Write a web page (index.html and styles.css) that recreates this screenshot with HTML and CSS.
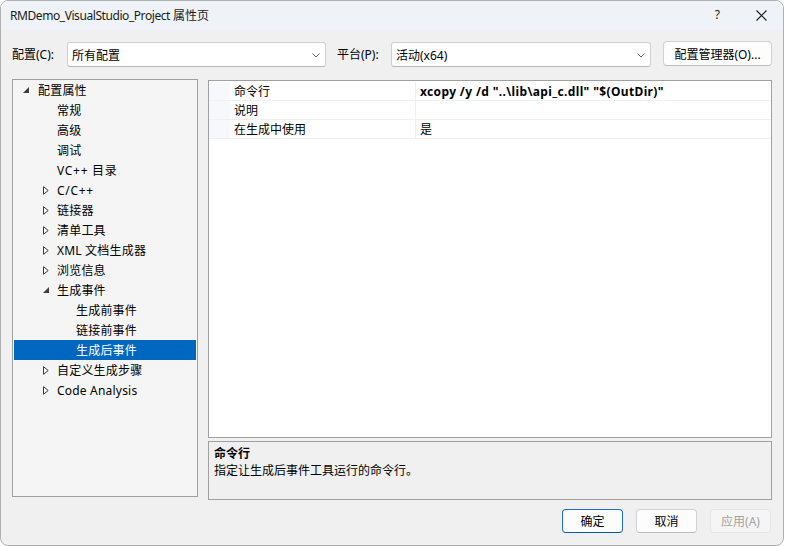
FILE: index.html
```html
<!DOCTYPE html>
<html>
<head>
<meta charset="utf-8">
<title>属性页</title>
<link rel="stylesheet" href="styles.css">
</head>
<body>
<div class="window">
  <div class="titlebar">
    <span class="title"><span class="title-latin">RMDemo_VisualStudio_Project</span> 属性页</span>
    <span class="help">?</span>
    <span class="close"><svg width="11" height="11" viewBox="0 0 11 11"><path d="M0.5 0.5L10.5 10.5M10.5 0.5L0.5 10.5" stroke="#1b1b1b" stroke-width="1.1" fill="none"/></svg></span>
  </div>
  <div class="content">
    <div class="config-row">
      <span class="lbl lbl-config">配置(C):</span>
      <div class="combo combo-config"><span>所有配置</span><svg class="chev" width="8" height="5" viewBox="0 0 8 5"><path d="M0.5 0.5L4 4L7.5 0.5" stroke="#606060" fill="none" stroke-width="1"/></svg></div>
      <span class="lbl lbl-platform">平台(P):</span>
      <div class="combo combo-platform"><span>活动(x64)</span><svg class="chev" width="8" height="5" viewBox="0 0 8 5"><path d="M0.5 0.5L4 4L7.5 0.5" stroke="#606060" fill="none" stroke-width="1"/></svg></div>
      <button class="btn btn-manager">配置管理器(O)...</button>
    </div>
    <div class="main">
      <div class="tree">
        <div class="row l0"><span class="exp"><svg width="6" height="6" viewBox="0 0 6 6"><path d="M6 0L6 6L0 6Z" fill="#3c3c3c"/></svg></span><span>配置属性</span></div>
        <div class="row l1"><span class="exp"></span><span>常规</span></div>
        <div class="row l1"><span class="exp"></span><span>高级</span></div>
        <div class="row l1"><span class="exp"></span><span>调试</span></div>
        <div class="row l1"><span class="exp"></span><span class="wide">VC++ 目录</span></div>
        <div class="row l1"><span class="exp"><svg width="6" height="9" viewBox="0 0 6 9"><path d="M0.5 0.7L5.2 4.5L0.5 8.3Z" fill="none" stroke="#3c3c3c" stroke-width="1"/></svg></span><span class="wide">C/C++</span></div>
        <div class="row l1"><span class="exp"><svg width="6" height="9" viewBox="0 0 6 9"><path d="M0.5 0.7L5.2 4.5L0.5 8.3Z" fill="none" stroke="#3c3c3c" stroke-width="1"/></svg></span><span>链接器</span></div>
        <div class="row l1"><span class="exp"><svg width="6" height="9" viewBox="0 0 6 9"><path d="M0.5 0.7L5.2 4.5L0.5 8.3Z" fill="none" stroke="#3c3c3c" stroke-width="1"/></svg></span><span>清单工具</span></div>
        <div class="row l1"><span class="exp"><svg width="6" height="9" viewBox="0 0 6 9"><path d="M0.5 0.7L5.2 4.5L0.5 8.3Z" fill="none" stroke="#3c3c3c" stroke-width="1"/></svg></span><span>XML 文档生成器</span></div>
        <div class="row l1"><span class="exp"><svg width="6" height="9" viewBox="0 0 6 9"><path d="M0.5 0.7L5.2 4.5L0.5 8.3Z" fill="none" stroke="#3c3c3c" stroke-width="1"/></svg></span><span>浏览信息</span></div>
        <div class="row l1"><span class="exp"><svg width="6" height="6" viewBox="0 0 6 6"><path d="M6 0L6 6L0 6Z" fill="#3c3c3c"/></svg></span><span>生成事件</span></div>
        <div class="row l2"><span class="exp"></span><span>生成前事件</span></div>
        <div class="row l2"><span class="exp"></span><span>链接前事件</span></div>
        <div class="row l2 selected"><span class="exp"></span><span>生成后事件</span></div>
        <div class="row l1"><span class="exp"><svg width="6" height="9" viewBox="0 0 6 9"><path d="M0.5 0.7L5.2 4.5L0.5 8.3Z" fill="none" stroke="#3c3c3c" stroke-width="1"/></svg></span><span>自定义生成步骤</span></div>
        <div class="row l1"><span class="exp"><svg width="6" height="9" viewBox="0 0 6 9"><path d="M0.5 0.7L5.2 4.5L0.5 8.3Z" fill="none" stroke="#3c3c3c" stroke-width="1"/></svg></span><span>Code Analysis</span></div>
      </div>
      <div class="right">
        <div class="grid">
          <div class="prow"><span class="gutter"></span><span class="pname">命令行</span><span class="pval bold">xcopy /y /d "..\lib\api_c.dll" "$(OutDir)"</span></div>
          <div class="prow"><span class="gutter"></span><span class="pname">说明</span><span class="pval"></span></div>
          <div class="prow"><span class="gutter"></span><span class="pname">在生成中使用</span><span class="pval">是</span></div>
        </div>
        <div class="desc">
          <div class="desc-title">命令行</div>
          <div class="desc-text">指定让生成后事件工具运行的命令行。</div>
        </div>
      </div>
    </div>
    <div class="buttons">
      <button class="btn btn-dlg btn-default">确定</button>
      <button class="btn btn-dlg">取消</button>
      <button class="btn btn-dlg btn-disabled">应用(A)</button>
    </div>
  </div>
</div>
</body>
</html>
```

FILE: styles.css
```css
html, body {
  margin: 0;
  padding: 0;
  background: #ffffff;
}
body {
  font-family: "Noto Sans", "Noto Sans CJK SC", sans-serif;
  font-size: 12px;
  color: #000;
}
.window {
  width: 784px;
  height: 546px;
  box-sizing: border-box;
  border: 1px solid #b0b0b0;
  border-radius: 8px;
  background: #f0f0f0;
  overflow: hidden;
  display: flex;
  flex-direction: column;
}
.titlebar {
  height: 29px;
  flex: none;
  background: #eff3f8;
  display: flex;
  align-items: center;
  padding-left: 9px;
  padding-right: 16px;
}
.title {
  flex: 1;
  font-size: 12px;
  color: #1a1a1a;
  margin-top: -2px;
  white-space: nowrap;
}
.title-latin {
  letter-spacing: -0.43px;
}
.help {
  font-size: 12px;
  color: #1a1a1a;
  margin-right: 36px;
  margin-top: -2px;
}
.close {
  display: flex;
  margin-top: -1px;
}
.content {
  flex: 1;
  padding: 11px 11px 0 11px;
  display: flex;
  flex-direction: column;
}
.config-row {
  display: flex;
  align-items: flex-start;
  height: 25px;
}
.lbl {
  height: 25px;
  line-height: 25px;
  margin-top: 1px;
  color: #000;
  white-space: nowrap;
}
.lbl-config {
  width: 55px;
}
.lbl-platform {
  width: 54px;
  margin-left: 11px;
}
.combo {
  height: 25px;
  margin-top: 1px;
  box-sizing: border-box;
  background: #fff;
  border: 1px solid #d0d0d0;
  border-bottom-color: #b8b8b8;
  border-radius: 3px;
  display: flex;
  align-items: center;
  padding-left: 4px;
  padding-right: 5px;
}
.combo span {
  flex: 1;
}
.combo-config {
  width: 259px;
}
.combo-platform {
  width: 260px;
}
.chev {
  display: block;
  margin-top: 1px;
}
.btn {
  font-family: "Noto Sans", "Noto Sans CJK SC", sans-serif;
  font-size: 12px;
  color: #000;
  background: #fdfdfd;
  border: 1px solid #d2d2d2;
  border-bottom-color: #bcbcbc;
  border-radius: 4px;
  box-sizing: border-box;
  padding: 0;
  margin: 0;
}
.btn-manager {
  width: 109px;
  height: 25px;
  margin-left: 12px;
}
.main {
  display: flex;
  margin-top: 13px;
  height: 421px;
}
.tree {
  width: 186px;
  height: 418px;
  box-sizing: border-box;
  border: 1px solid #a0a0a0;
  background: #f5f5f5;
  padding: 0 1px;
  flex: none;
}
.row {
  height: 20px;
  display: flex;
  align-items: center;
  white-space: nowrap;
  color: #000;
  letter-spacing: 0.2px;
}
.row .wide {
  letter-spacing: 0.7px;
}
.row.l0 { padding-left: 5px; }
.row.l1 { padding-left: 24px; }
.row.l2 { padding-left: 43px; }
.exp {
  width: 19px;
  display: flex;
  align-items: center;
  padding-left: 4px;
  box-sizing: border-box;
}
.row.l1 .exp { padding-left: 5px; }
.exp svg { display: block; }
.row.selected {
  background: #0067c0;
  color: #fff;
}
.right {
  margin-left: 10px;
  width: 566px;
  margin-top: 1px;
  display: flex;
  flex-direction: column;
}
.grid {
  height: 358px;
  box-sizing: border-box;
  border: 1px solid #a0a0a0;
  background: #fff;
  padding-top: 1px;
}
.prow {
  height: 19px;
  box-sizing: border-box;
  border-bottom: 1px solid #eef0f4;
  display: flex;
  align-items: stretch;
}
.gutter {
  width: 21px;
  flex: none;
  background: #f6f8fc;
}
.pname {
  width: 186px;
  flex: none;
  padding-left: 4px;
  box-sizing: border-box;
  border-right: 1px solid #eef0f4;
  display: flex;
  align-items: center;
  white-space: nowrap;
}
.pval {
  flex: 1;
  padding-left: 4px;
  display: flex;
  align-items: center;
  white-space: nowrap;
}
.bold {
  font-weight: bold;
  letter-spacing: 0.36px;
}
.desc {
  margin-top: 3px;
  height: 59px;
  box-sizing: border-box;
  border: 1px solid #a0a0a0;
  background: #f0f0f0;
  padding: 3px 5px;
}
.desc-title {
  font-weight: bold;
  line-height: 17px;
}
.desc-text {
  line-height: 18px;
}
.buttons {
  display: flex;
  justify-content: flex-end;
  margin-top: 9px;
  padding-right: 1px;
  gap: 13px;
}
.btn-dlg {
  width: 61px;
  height: 24px;
}
.btn-default {
  border: 1px solid #1e6fc4;
  border-bottom-color: #0a58aa;
}
.btn-disabled {
  background: #f5f5f5;
  border-color: #e6e6e6;
  color: #a2a2a2;
}
```
